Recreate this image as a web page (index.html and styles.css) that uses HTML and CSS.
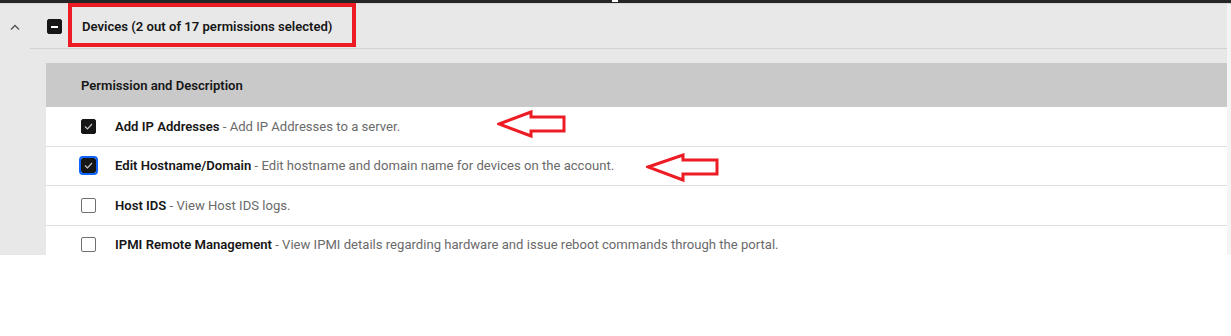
FILE: index.html
```html
<!DOCTYPE html>
<html lang="en">
<head>
    <meta charset="UTF-8">
    <title>Permissions - Devices</title>
    <link rel="stylesheet" href="styles.css">
</head>
<body>
    <div class="topbar"><span class="notch"></span></div>

    <div class="panel">
        <div class="section-header">
            <span class="chevron">
                <svg width="10" height="6" viewBox="0 0 10 6"><path d="M1 5.5 L5 1.5 L9 5.5" fill="none" stroke="#525252" stroke-width="1.3"/></svg>
            </span>
            <span class="checkbox indeterminate"></span>
            <span class="section-title">Devices (2 out of 17 permissions selected)</span>
            <!-- annotation box -->
            <span class="mark-box"></span>
        </div>

        <div class="section-body">
            <div class="perm-table">
                <div class="perm-head">Permission and Description</div>

                <div class="perm-row">
                    <span class="checkbox checked"><svg width="9" height="7" viewBox="0 0 9 7"><path d="M1 3.5 L3.5 6 L8 1" fill="none" stroke="#c6c6c6" stroke-width="1.2"/></svg></span>
                    <span class="perm-text"><b>Add IP Addresses</b> - Add IP Addresses to a server.</span>
                    <svg class="arrow arrow-one" width="70" height="30" viewBox="0 0 70 30"><polygon points="2,15 34,3 34,8 67,8 67,22 34,22 34,27" fill="none" stroke="#ed1c24" stroke-width="3" stroke-linejoin="miter"/></svg>
                </div>

                <div class="perm-row">
                    <span class="checkbox checked focused"><svg width="9" height="7" viewBox="0 0 9 7"><path d="M1 3.5 L3.5 6 L8 1" fill="none" stroke="#c6c6c6" stroke-width="1.2"/></svg></span>
                    <span class="perm-text"><b>Edit Hostname/Domain</b> - Edit hostname and domain name for devices on the account.</span>
                    <svg class="arrow arrow-two" width="74" height="30" viewBox="0 0 74 30"><polygon points="2,14 37,2 37,7 71,7 71,21 37,21 37,27" fill="none" stroke="#ed1c24" stroke-width="3" stroke-linejoin="miter"/></svg>
                </div>

                <div class="perm-row">
                    <span class="checkbox"></span>
                    <span class="perm-text"><b>Host IDS</b> - View Host IDS logs.</span>
                </div>

                <div class="perm-row">
                    <span class="checkbox"></span>
                    <span class="perm-text"><b>IPMI Remote Management</b> - View IPMI details regarding hardware and issue reboot commands through the portal.</span>
                </div>
            </div>
        </div>
    </div>
</body>
</html>
```

FILE: styles.css
```css
* {
    margin: 0;
    padding: 0;
    box-sizing: border-box;
}

body {
    background-color: #fff;
    font-family: Roboto, 'Noto Sans', sans-serif;
    font-size: 13.1px;
    color: #161616;
    overflow: hidden;
}

.topbar {
    height: 4px;
    background-color: #262626;
    border-bottom: 1px solid #d8d8d8;
    position: relative;
}

.notch {
    position: absolute;
    left: 612px;
    top: 0;
    width: 6px;
    height: 2px;
    background-color: #fff;
}

.panel {
    width: 1231px;
    height: 251px;
    display: flex;
    flex-direction: column;
    background-color: #e8e8e8;
    border-right: 4px solid #f4f4f4;
}

.section-header {
    position: relative;
    display: flex;
    align-items: center;
    height: 45px;
    flex-shrink: 0;
}

.section-header::after {
    content: '';
    position: absolute;
    left: 30px;
    right: 0;
    bottom: 0;
    height: 1.5px;
    background-color: #d2d2d2;
}

.chevron {
    width: 47px;
    padding-left: 10px;
    display: flex;
    align-items: center;
}

.section-title {
    margin-left: 20px;
    font-weight: 600;
}

.mark-box {
    position: absolute;
    left: 68px;
    top: -1px;
    width: 288px;
    height: 44px;
    border: 4px solid #ed1c24;
}

.checkbox {
    display: inline-flex;
    align-items: center;
    justify-content: center;
    width: 15px;
    height: 15px;
    border: 1px solid #6f6f6f;
    border-radius: 2px;
    background-color: #fff;
    flex-shrink: 0;
}

.checkbox.checked,
.checkbox.indeterminate {
    background-color: #161616;
    border-color: #161616;
}

.checkbox.indeterminate::before {
    content: '';
    width: 7px;
    height: 2px;
    background-color: #fff;
}

.checkbox.focused {
    outline: 2px solid #0f62fe;
    outline-offset: 0;
}

.section-body {
    flex: 1;
    overflow: hidden;
    padding: 14px 0 0 46px;
}

.perm-table {
    background-color: #fff;
}

.perm-head {
    height: 44px;
    display: flex;
    align-items: center;
    padding-left: 35px;
    background-color: #c9c9c9;
    font-weight: 600;
}

.perm-row {
    position: relative;
    display: flex;
    align-items: center;
    height: 39.5px;
    padding-left: 35px;
    border-bottom: 1.5px solid #e0e0e0;
}

.perm-text {
    margin-left: 19px;
    color: #6a6a6a;
}

.perm-text b {
    font-weight: 600;
    color: #161616;
}

.arrow {
    position: absolute;
}

.arrow-one {
    left: 451px;
    top: 2px;
}

.arrow-two {
    left: 600px;
    top: 6px;
}
```
